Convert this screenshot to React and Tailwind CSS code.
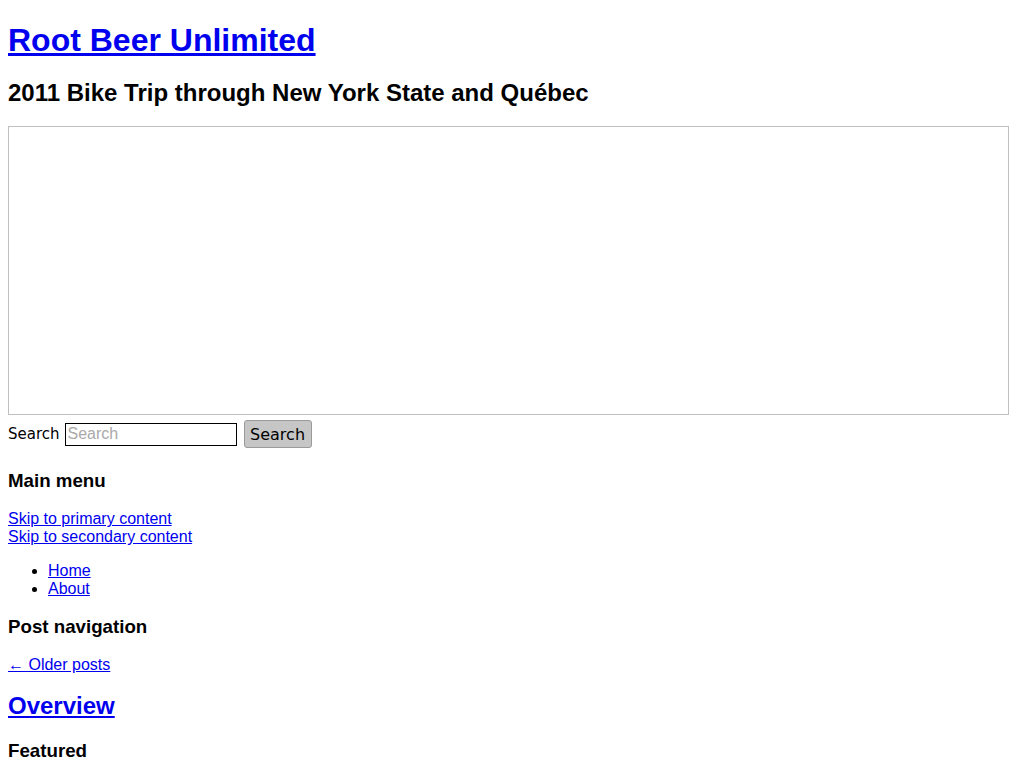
import React from "react";

const App = () => {
  return (
    <div className="min-h-screen bg-white px-2 text-black font-['Liberation_Sans',Arial,sans-serif] text-[16px] leading-[18px]">
      <h1 className="mt-[22px] text-[32px] font-bold leading-[1.15]">
        <a href="#" className="text-[#0000ee] underline">
          Root Beer Unlimited
        </a>
      </h1>

      <h2 className="mt-[20px] text-[24px] font-bold leading-[1.15]">
        2011 Bike Trip through New York State and Québec
      </h2>

      <div className="mt-[20px] w-[1001px] h-[289px] border border-[#c0c0c0]"></div>

      <form className="mt-[5px] flex items-center h-[28px]">
        <label className="font-['DejaVu_Sans',sans-serif] text-[15px]">Search</label>
        <input
          type="text"
          placeholder="Search"
          className="ml-[5px] w-[172px] h-[23px] border border-black px-[2px] text-[16px] placeholder:text-[#a9a9a9] outline-none"
        />
        <button
          type="button"
          className="ml-[7px] w-[68px] h-[28px] rounded-[3px] border border-[#9a9a9a] bg-[#c6c6c6] font-['DejaVu_Sans',sans-serif] text-[16px] leading-[28px]"
        >
          Search
        </button>
      </form>

      <h3 className="mt-[21.7px] text-[18.72px] font-bold leading-[1.15]">Main menu</h3>

      <div className="mt-[18.72px]">
        <a href="#" className="block w-fit text-[#0000ee] underline">
          Skip to primary content
        </a>
        <a href="#" className="block w-fit text-[#0000ee] underline">
          Skip to secondary content
        </a>
      </div>

      <ul className="mt-4 pl-10 list-disc">
        <li>
          <a href="#" className="text-[#0000ee] underline">Home</a>
        </li>
        <li>
          <a href="#" className="text-[#0000ee] underline">About</a>
        </li>
      </ul>

      <h3 className="mt-[17.7px] text-[18.72px] font-bold leading-[1.15]">Post navigation</h3>

      <p className="mt-[18.72px]">
        <a href="#" className="text-[#0000ee] underline">← Older posts</a>
      </p>

      <h2 className="mt-[17.9px] text-[24px] font-bold leading-[1.15]">
        <a href="#" className="text-[#0000ee] underline">Overview</a>
      </h2>

      <h3 className="mt-[19.92px] text-[18.72px] font-bold leading-[1.15]">Featured</h3>
    </div>
  );
};

export default App;
